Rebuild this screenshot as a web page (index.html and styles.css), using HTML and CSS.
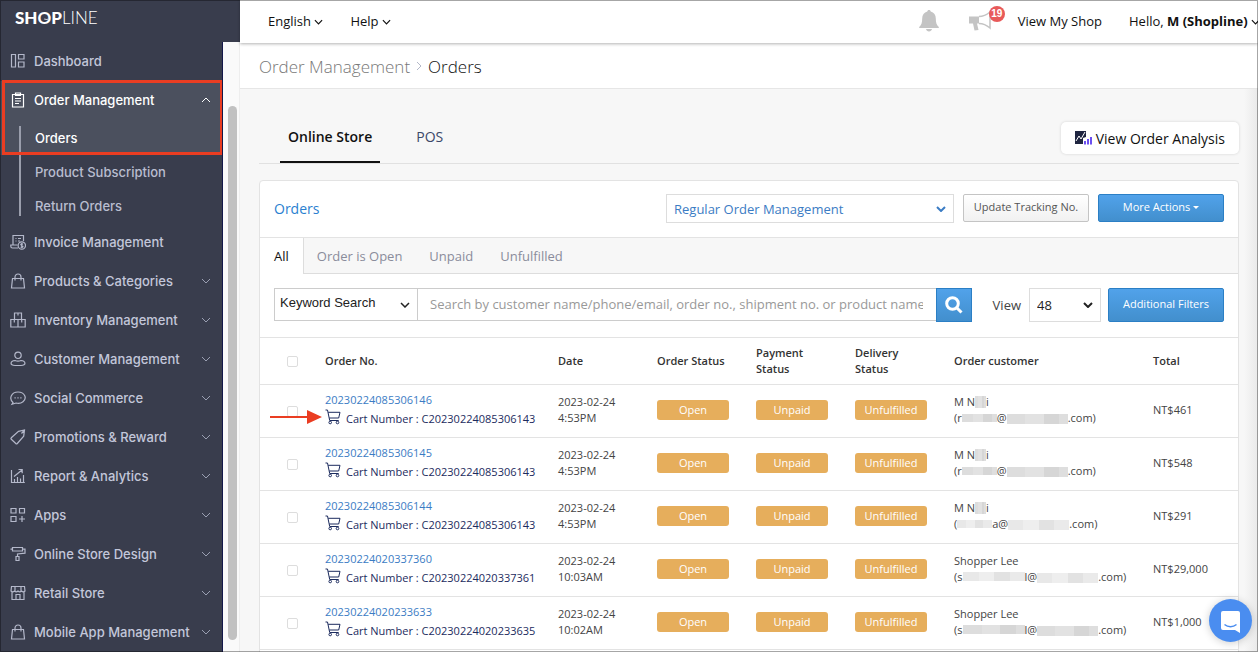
FILE: index.html
```html
<!DOCTYPE html>
<html lang="en">
<head>
  <meta charset="UTF-8">
  <title>Orders - SHOPLINE</title>
  <link rel="stylesheet" href="styles.css">
</head>
<body>
  <!-- shared icons -->
  <svg class="sprite" width="0" height="0">
    <symbol id="down" viewBox="0 0 10 6"><path d="M1 1l4 4 4-4"/></symbol>
    <symbol id="cart" viewBox="0 0 16 16">
      <path d="M.5 1h2l2.200 10.500h9M3.200 3.300h11.800l-1.300 5.700H4.300"/>
      <circle cx="5.200" cy="13.500" r="1.300"/><circle cx="12.500" cy="13.500" r="1.300"/>
    </symbol>
    <symbol id="bag" viewBox="0 0 16 16"><path d="M2.500 5.500h11l1 9.500h-13zM5 7.500V4a3 3 0 0 1 6 0v3.500"/></symbol>
  </svg>

  <aside class="sidebar">
    <a class="brand" href="#"><b>SH<span class="brand-o">O</span>P</b>LINE</a>
    <div class="sidebar-body">
      <nav class="nav">
        <a class="nav-item" href="#">
          <svg class="icon" viewBox="0 0 16 16"><path d="M1.500 1.500h4v12.500h-4zM8.500 1.500h5.500v4.500H8.500zM8.500 9h5.500v5H8.500z"/></svg>
          <span>Dashboard</span>
        </a>
        <div class="nav-group">
          <a class="nav-item active" href="#">
            <svg class="icon" viewBox="0 0 16 16"><path d="M2.500 2.500h11V15h-11zM5.500 1h5v2.500h-5zM5 6.500h6M5 9h6M5 11.500h4"/></svg>
            <span>Order Management</span>
            <svg class="chevron up" viewBox="0 0 10 6"><use href="#down"/></svg>
          </a>
          <div class="submenu">
            <a class="current" href="#">Orders</a>
            <a href="#">Product Subscription</a>
            <a href="#">Return Orders</a>
          </div>
          <div class="highlight"></div>
        </div>
        <a class="nav-item" href="#">
          <svg class="icon" viewBox="0 0 16 16"><path d="M3 11V1.500h10.500V7M3 11H.8v1.200c0 1 .7 1.800 1.700 1.800H8M3 11h4.500M5.500 4.500h1M8 4.500h3M5.500 7h1M8 7h2"/><circle cx="11.800" cy="11.500" r="3.700"/><path d="M13 10.200c-.8-.7-2.300-.5-2.300.4 0 1.100 2.300.7 2.300 1.900 0 .9-1.600 1.100-2.400.3M11.800 9v5"/></svg>
          <span>Invoice Management</span>
        </a>
        <a class="nav-item" href="#">
          <svg class="icon"><use href="#bag"/></svg>
          <span>Products &amp; Categories</span>
          <svg class="chevron"><use href="#down"/></svg>
        </a>
        <a class="nav-item" href="#">
          <svg class="icon" viewBox="0 0 16 16"><path d="M4.500 1h7v6.500h-7zM.8 7.500H8V15H.8zM8 7.500h7.200V15H8zM8 1v2.500M4.300 7.500v3M11.700 7.500v3"/></svg>
          <span>Inventory Management</span>
          <svg class="chevron"><use href="#down"/></svg>
        </a>
        <a class="nav-item" href="#">
          <svg class="icon" viewBox="0 0 16 16"><circle cx="8" cy="4.300" r="3.200"/><path d="M5 9.500c-5 .5-5.500 5 0 5h6c5.500 0 5-4.500 0-5-2 .8-4 .8-6 0z"/></svg>
          <span>Customer Management</span>
          <svg class="chevron"><use href="#down"/></svg>
        </a>
        <a class="nav-item" href="#">
          <svg class="icon" viewBox="0 0 16 16"><path d="M3 12.500C-1.500 8.500 1.500 2 8 2s9.500 6 5 9.700c-2 1.600-4.500 2-7 1.300L2 14.200zM4.500 7.800h1.200M7.400 7.800h1.200M10.300 7.800h1.200"/></svg>
          <span>Social Commerce</span>
          <svg class="chevron"><use href="#down"/></svg>
        </a>
        <a class="nav-item" href="#">
          <svg class="icon" viewBox="0 0 16 16"><path d="M8.500 2.300L14.500 1l-.8 6.200-6.400 7.300c-.5.500-1 .5-1.500 0L1.300 10.300c-.5-.5-.5-1 0-1.500zM14.500 1l-3 3.500"/></svg>
          <span>Promotions &amp; Reward</span>
          <svg class="chevron"><use href="#down"/></svg>
        </a>
        <a class="nav-item" href="#">
          <svg class="icon" viewBox="0 0 16 16"><path d="M1.500 2v12.500h13.300M4.500 14.500V11M7.500 14.500V9M10.500 14.500v-4M13.500 14.500V7M4 8.500L12 2M8.500 1.500h3.700v3.700"/></svg>
          <span>Report &amp; Analytics</span>
          <svg class="chevron"><use href="#down"/></svg>
        </a>
        <a class="nav-item" href="#">
          <svg class="icon" viewBox="0 0 16 16"><path d="M1 1.500h5V6H1zM9.500 1.500h5V6h-5zM1 9.500h5v5H1zM12 9v6M9 12h6"/></svg>
          <span>Apps</span>
          <svg class="chevron"><use href="#down"/></svg>
        </a>
        <a class="nav-item" href="#">
          <svg class="icon" viewBox="0 0 16 16"><path d="M2.500 1.500h10V5h-10zM2.500 3.200H.5M12.500 3.200H15v4L7.500 8v2.500M6 10.500h3v4H6z"/></svg>
          <span>Online Store Design</span>
          <svg class="chevron"><use href="#down"/></svg>
        </a>
        <a class="nav-item" href="#">
          <svg class="icon" viewBox="0 0 16 16"><path d="M1.500 1.500h13L15 6c-1 1-2.500 1-3.500 0-1 1-2.500 1-3.500 0-1 1-2.500 1-3.500 0C3.500 7 2 7 1 6zM2 7v7.500h12V7M6 14.500V9.500h4v5M5 1.500V6M11 1.500V6"/></svg>
          <span>Retail Store</span>
          <svg class="chevron"><use href="#down"/></svg>
        </a>
        <a class="nav-item" href="#">
          <svg class="icon"><use href="#bag"/></svg>
          <span>Mobile App Management</span>
          <svg class="chevron"><use href="#down"/></svg>
        </a>
      </nav>
      <div class="scroll-track"><div class="scroll-thumb"></div></div>
    </div>
  </aside>

  <main class="main">
    <header class="topbar">
      <a href="#">English <svg class="caret"><use href="#down"/></svg></a>
      <a href="#">Help <svg class="caret"><use href="#down"/></svg></a>
      <button class="icon-btn bell" aria-label="Notifications">
        <svg width="20" height="22" viewBox="0 0 20 22"><path d="M10 0c1 0 1.700.7 1.700 1.600C15 2.400 16.800 5 16.800 8.500c0 4.500.9 6.700 3 8.500v1H.2v-1c2.100-1.800 3-4 3-8.500 0-3.500 1.800-6.100 5.100-6.900C8.300.7 9 0 10 0zM7 19h6c-.3 1.500-1.500 2.500-3 2.500S7.300 20.500 7 19z"/></svg>
      </button>
      <button class="icon-btn news" aria-label="News">
        <svg width="22" height="20" viewBox="0 0 22 20"><path d="M0 5.500h10v7H8l1.500 6.500-4 .5L4 12.500H0z"/><path class="horn" d="M10 5.500c4 0 7.500-1.600 11-4.500v16c-3.500-3-7-4.500-11-4.500"/></svg>
        <span class="count">19</span>
      </button>
      <a class="shop-link" href="#">View My Shop</a>
      <a class="user" href="#">Hello, <b>M (Shopline)</b> <svg class="caret"><use href="#down"/></svg></a>
    </header>

    <div class="breadcrumb">
      <a href="#">Order Management</a>
      <svg width="6" height="10" viewBox="0 0 6 10"><path d="M1 1l4 4-4 4"/></svg>
      <span>Orders</span>
    </div>

    <div class="content">
      <div class="channels">
        <a class="selected" href="#">Online Store</a>
        <a href="#">POS</a>
        <button class="analysis">
          <svg width="17" height="14" viewBox="0 0 17 14"><path fill="#1f2540" d="M0 0h11v6L8 7v6H0z"/><path fill="none" stroke="#fff" d="M1 10l3-5 2 3 4-7"/><path fill="#6c50f0" d="M9 10h2v3.500H9zM12 8h2v5.500h-2zM15 6h2v7.500h-2z"/></svg>
          View Order Analysis
        </button>
      </div>

      <section class="panel">
        <div class="panel-head">
          <h1>Orders</h1>
          <div class="select mode">
            <select aria-label="Order type"><option>Regular Order Management</option></select>
            <svg class="arrow"><use href="#down"/></svg>
          </div>
          <button class="btn">Update Tracking No.</button>
          <button class="btn primary">More Actions <span class="tri"></span></button>
        </div>

        <div class="tabs">
          <a class="selected" href="#">All</a>
          <a href="#">Order is Open</a>
          <a href="#">Unpaid</a>
          <a href="#">Unfulfilled</a>
        </div>

        <div class="search">
          <div class="select keyword">
            <select aria-label="Search type"><option>Keyword Search</option></select>
            <svg class="arrow"><use href="#down"/></svg>
          </div>
          <input type="text" aria-label="Search orders" placeholder="Search by customer name/phone/email, order no., shipment no. or product name">
          <button class="go" aria-label="Search">
            <svg width="18" height="18" viewBox="0 0 18 18"><circle cx="7.500" cy="7.500" r="5.800"/><path d="M12 12l4.500 4.500"/></svg>
          </button>
          <label for="page-size">View</label>
          <div class="select size">
            <select id="page-size"><option>48</option></select>
            <svg class="arrow"><use href="#down"/></svg>
          </div>
          <button class="btn primary filters">Additional Filters</button>
        </div>

        <table class="orders">
          <colgroup>
            <col class="c-check"><col><col class="c-mid"><col class="c-mid"><col class="c-mid"><col class="c-mid"><col class="c-customer"><col class="c-total">
          </colgroup>
          <thead>
            <tr>
              <th><input type="checkbox" aria-label="Select all"></th>
              <th>Order No.</th>
              <th>Date</th>
              <th>Order Status</th>
              <th>Payment Status</th>
              <th>Delivery Status</th>
              <th>Order customer</th>
              <th>Total</th>
            </tr>
          </thead>
          <tbody>
            <tr>
              <td class="pointed">
                <input type="checkbox" aria-label="Select order">
                <svg class="pointer" width="52" height="14" viewBox="0 0 52 14"><path d="M0 6h37V0l15 7-15 7V8H0z"/></svg>
              </td>
              <td><a href="#">20230224085306146</a><div class="cart"><svg><use href="#cart"/></svg>Cart Number : C20230224085306143</div></td>
              <td>2023-02-24<br>4:53PM</td>
              <td><span class="badge">Open</span></td>
              <td><span class="badge">Unpaid</span></td>
              <td><span class="badge">Unfulfilled</span></td>
              <td>M N<i class="mask name"></i>i<br>(r<i class="mask user-part"></i>@<i class="mask host"></i>.com)</td>
              <td>NT$461</td>
            </tr>
            <tr>
              <td><input type="checkbox" aria-label="Select order"></td>
              <td><a href="#">20230224085306145</a><div class="cart"><svg><use href="#cart"/></svg>Cart Number : C20230224085306143</div></td>
              <td>2023-02-24<br>4:53PM</td>
              <td><span class="badge">Open</span></td>
              <td><span class="badge">Unpaid</span></td>
              <td><span class="badge">Unfulfilled</span></td>
              <td>M N<i class="mask name"></i>i<br>(r<i class="mask user-part"></i>@<i class="mask host"></i>.com)</td>
              <td>NT$548</td>
            </tr>
            <tr>
              <td><input type="checkbox" aria-label="Select order"></td>
              <td><a href="#">20230224085306144</a><div class="cart"><svg><use href="#cart"/></svg>Cart Number : C20230224085306143</div></td>
              <td>2023-02-24<br>4:53PM</td>
              <td><span class="badge">Open</span></td>
              <td><span class="badge">Unpaid</span></td>
              <td><span class="badge">Unfulfilled</span></td>
              <td>M N<i class="mask name"></i>i<br>(<i class="mask user-part light"></i>a@<i class="mask host light"></i>.com)</td>
              <td>NT$291</td>
            </tr>
            <tr>
              <td><input type="checkbox" aria-label="Select order"></td>
              <td><a href="#">20230224020337360</a><div class="cart"><svg><use href="#cart"/></svg>Cart Number : C20230224020337361</div></td>
              <td>2023-02-24<br>10:03AM</td>
              <td><span class="badge">Open</span></td>
              <td><span class="badge">Unpaid</span></td>
              <td><span class="badge">Unfulfilled</span></td>
              <td>Shopper Lee<br>(s<i class="mask long light"></i>l@<i class="mask host light"></i>.com)</td>
              <td>NT$29,000</td>
            </tr>
            <tr>
              <td><input type="checkbox" aria-label="Select order"></td>
              <td><a href="#">20230224020233633</a><div class="cart"><svg><use href="#cart"/></svg>Cart Number : C20230224020233635</div></td>
              <td>2023-02-24<br>10:02AM</td>
              <td><span class="badge">Open</span></td>
              <td><span class="badge">Unpaid</span></td>
              <td><span class="badge">Unfulfilled</span></td>
              <td>Shopper Lee<br>(s<i class="mask long"></i>l@<i class="mask host"></i>.com)</td>
              <td>NT$1,000</td>
            </tr>
          </tbody>
        </table>
      </section>
    </div>
  </main>

  <button class="chat" aria-label="Chat">
    <svg width="22" height="24" viewBox="0 0 22 24"><path class="bubble" d="M3 1h15a2 2 0 0 1 2 2v20l-5-3H3a2 2 0 0 1-2-2V3a2 2 0 0 1 2-2z"/><path class="smile" d="M4.500 14.500c3.500 3 8.500 3 12 0"/></svg>
  </button>
</body>
</html>
```
FILE: styles.css
```css
* {
  box-sizing: border-box;
}
body {
  margin: 0;
  height: 100vh;
  display: flex;
  overflow: hidden;
  font-family: "Open Sans", sans-serif;
  font-size: 13px;
  color: #111;
  background: #f7f7f7;
}
/* window frame */
body::after {
  content: "";
  position: fixed;
  inset: 0;
  border: 1px solid rgba(0,0,0,0.35);
  pointer-events: none;
  z-index: 10;
}
a {
  color: inherit;
  text-decoration: none;
}
button, input, select {
  font-family: inherit;
  margin: 0;
}
svg {
  flex: none;
  fill: none;
}
.sprite {
  position: absolute;
}

/* sidebar */
.sidebar {
  width: 240px;
  flex: none;
  display: flex;
  flex-direction: column;
  background: #fafafa;
  font-family: Inter, sans-serif;
}
.brand {
  flex: none;
  height: 42px;
  padding: 8px 15px;
  background: #393d4d;
  color: #fff;
  font-family: Lato, sans-serif;
  font-weight: 300;
  font-size: 17px;
  line-height: 20px;
}
.brand b {
  font-weight: 900;
}
.brand-o {
  position: relative;
  font-weight: 700;
}
.brand-o::after {
  content: "";
  position: absolute;
  left: 5px;
  top: 6px;
  width: 5px;
  height: 5px;
  border: 1px solid transparent;
  border-bottom-color: #c9ccd6;
  border-radius: 50%;
}
.sidebar-body {
  flex: 1;
  min-height: 0;
  display: flex;
}
.nav {
  flex: 1;
  background: #393d4d;
  border-right: 1px solid #14184a;
  overflow: hidden;
}
.nav-item {
  display: flex;
  align-items: center;
  gap: 8px;
  height: 39px;
  padding: 0 11px 1px 10px;
  color: #c3c7da;
  font-size: 13px;
  font-weight: 500;
}
.nav-item span {
  flex: 1;
}
.icon {
  width: 16px;
  height: 16px;
  stroke: #b4b8ca;
  stroke-width: 1.200;
}
.chevron {
  width: 10px;
  height: 6px;
  stroke: #9a9fb2;
}
.nav-group {
  position: relative;
}
.nav-item.active {
  color: #fff;
  background: #4b505e;
}
.active .icon, .active .chevron {
  stroke: #fff;
}
.up {
  transform: rotate(180deg);
}
.submenu {
  padding-top: 1px;
  background: linear-gradient(#4b505e 35px, #393d4d 35px);
  position: relative;
}
.submenu::before {
  content: "";
  position: absolute;
  left: 19px;
  top: 6px;
  bottom: 7px;
  width: 2px;
  background: #9a9eac;
}
.submenu a {
  display: block;
  padding-left: 35px;
  line-height: 34px;
  color: #b9bdd0;
  font-weight: 500;
}
.submenu .current {
  color: #fff;
}
.highlight {
  position: absolute;
  left: 2px;
  right: -1px;
  top: -1px;
  height: 75px;
  border: 3px solid #ea3d22;
}
.scroll-track {
  width: 17px;
  padding: 64px 2px 12px 5px;
  border-right: 1px solid #eee;
}
.scroll-thumb {
  height: 100%;
  border-radius: 5px;
  background: #c1c1c1;
}

/* top bar */
.main {
  flex: 1;
  min-width: 0;
  display: flex;
  flex-direction: column;
  position: relative;
}
.topbar {
  flex: none;
  height: 43px;
  display: flex;
  align-items: center;
  padding: 0 0 2px 28px;
  background: #fff;
  box-shadow: 0 1px 3px rgba(0,0,0,0.3);
  z-index: 1;
  white-space: nowrap;
}
.topbar > a {
  margin-right: 27px;
}
.caret {
  width: 9px;
  height: 6px;
  stroke: #111;
  stroke-width: 1.300;
  vertical-align: 1px;
}
.icon-btn {
  border: none;
  background: none;
  padding: 0;
  display: flex;
  position: relative;
}
.icon-btn svg {
  fill: #c4c4c4;
}
.icon-btn .horn {
  fill: #fff;
  stroke: #c4c4c4;
  stroke-width: 1.500;
}
.bell {
  margin-left: auto;
}
.news {
  margin: 1px 27px 0 30px;
}
.count {
  position: absolute;
  left: 20px;
  top: -5px;
  width: 16px;
  height: 16px;
  border-radius: 50%;
  background: #e85a5a;
  color: #fff;
  font: bold 10px/16px "Liberation Sans", sans-serif;
  text-align: center;
}
.topbar .user {
  margin-right: -2px;
}

.breadcrumb {
  flex: none;
  height: 46px;
  display: flex;
  align-items: center;
  gap: 6px;
  padding: 1px 19px 0;
  background: #fff;
  border-bottom: 1px solid #e6e6e6;
  font-size: 17px;
  font-weight: 300;
}
.breadcrumb a {
  color: #777;
}
.breadcrumb svg {
  stroke: #b3b8c8;
}

/* content */
.content {
  flex: 1;
  min-height: 0;
  padding: 0 19px;
  background: linear-gradient(to left, #e9e9e9, #f7f7f7 14px);
}
.channels {
  display: flex;
  align-items: flex-end;
  height: 75px;
  padding-left: 21px;
  border-bottom: 1px solid #e1e1e1;
  font-size: 14px;
  color: #3b4868;
}
.channels a {
  height: 36px;
  padding: 0 8px;
  margin-right: 28px;
}
.channels .selected {
  border-bottom: 2px solid #111;
  color: #111;
  font-weight: 600;
}
.analysis {
  display: flex;
  align-items: center;
  gap: 4px;
  height: 32px;
  margin: 0 0 9px auto;
  padding: 0 14px;
  border: none;
  border-radius: 5px;
  background: #fff;
  box-shadow: 0 0 3px rgba(0,0,0,0.15);
  color: #111;
  font-size: 14px;
  font-weight: 500;
}
.panel {
  margin-top: 16px;
  padding-bottom: 20px;
  border: 1px solid #e3e3e3;
  border-radius: 4px;
  background: #fff;
}
.panel-head {
  display: flex;
  gap: 9px;
  height: 57px;
  padding: 13px 14px;
  border-bottom: 1px solid #e3e3e3;
}
h1 {
  flex: 1;
  margin: 0;
  color: #2a80d0;
  font-size: 14px;
  font-weight: 400;
  line-height: 30px;
}
.select {
  display: grid;
  align-items: center;
}
.select select, .select .arrow {
  grid-area: 1 / 1;
}
.select select {
  appearance: none;
  height: 100%;
  width: 100%;
  border: 1px solid #ddd;
  background: #fff;
  color: #222;
  font-size: 13px;
  padding: 0 7px;
}
.arrow {
  width: 10px;
  height: 6px;
  justify-self: end;
  margin-right: 8px;
  stroke: #222;
  stroke-width: 1.500;
  pointer-events: none;
}
.mode {
  width: 288px;
  height: 29px;
}
.mode select {
  color: #3b7cc4;
}
.mode .arrow {
  stroke: #3b7cc4;
  stroke-width: 2;
}
.btn {
  width: 126px;
  height: 28px;
  padding: 0 0 3px;
  border: 1px solid #c4c4c4;
  border-radius: 2px;
  background: linear-gradient(#fff, #f1f1f1);
  color: #555;
  font-size: 11px;
}
.primary {
  border-color: #2b7fc5;
  background: linear-gradient(#51a2ea, #428fcd);
  color: #fff;
  font-weight: 500;
}
.tri {
  display: inline-block;
  border: 3px solid transparent;
  border-top-color: #fff;
  border-bottom: none;
  vertical-align: 2px;
}
.tabs {
  display: flex;
  height: 36px;
  line-height: 37px;
  background: #f7f7f7;
  color: #8a8c9b;
}
.tabs a {
  padding: 0 14px 0 13px;
  border-bottom: 1px solid #ddd;
}
.tabs .selected {
  padding-left: 14px;
  background: #fff;
  color: #111;
  border-right: 1px solid #ddd;
  border-bottom: none;
}
.tabs::after {
  content: "";
  flex: 1;
  border-bottom: 1px solid #ddd;
}
.search {
  display: flex;
  height: 64px;
  padding: 14px 14px 15px;
  border-bottom: 1px solid #e3e3e3;
}
.keyword {
  width: 144px;
  height: 33px;
}
.keyword select {
  border-color: #ccc;
  padding: 0 6px 4px 5px;
  font-family: "Liberation Sans", sans-serif;
}
.search input {
  flex: 1;
  min-width: 0;
  height: 33px;
  padding: 0 13px 2px 12px;
  border: 1px solid #ccc;
  border-width: 1px 0;
  background: #fff;
  font-size: 13px;
}
.search input::placeholder {
  color: #999;
}
.go {
  width: 36px;
  height: 34px;
  padding: 0;
  border: 1px solid #2b7fc5;
  background: linear-gradient(#51a2ea, #428fcd);
}
.go svg {
  display: block;
  margin: auto;
  stroke: #fff;
  stroke-width: 3;
}
.search label {
  padding: 0 8px 0 21px;
  line-height: 34px;
  color: #444;
}
.size {
  width: 72px;
  height: 34px;
  margin-right: 7px;
}
.size .arrow {
  stroke-width: 2;
}
.filters {
  width: 116px;
  height: 34px;
}

/* orders table */
.orders {
  width: 100%;
  table-layout: fixed;
  border-collapse: collapse;
  font-size: 11px;
  line-height: 16px;
  color: #444;
}
.c-check {
  width: 55px;
}
.c-mid {
  width: 99px;
}
.c-customer {
  width: 199px;
}
.c-total {
  width: 95px;
}
th, td {
  height: 53px;
  padding: 0 10px 1px;
  border-bottom: 1px solid #e3e3e3;
  text-align: left;
}
th {
  height: 46px;
  padding-bottom: 0;
  color: #333;
  font-weight: 600;
}
td a {
  display: block;
  color: #3b7cc4;
}
th:first-child, td:first-child {
  padding: 2px 0 0 27px;
}
.orders input {
  appearance: none;
  display: block;
  width: 11px;
  height: 11px;
  border: 1px solid #ddd;
  border-radius: 2px;
  background: #fff;
}
.cart {
  display: flex;
  gap: 5px;
  margin-top: 1px;
  line-height: 20px;
  color: #1c2b5e;
  white-space: nowrap;
}
.cart svg {
  width: 16px;
  height: 16px;
  stroke: #1c2b5e;
}
.pointed {
  position: relative;
}
.pointer {
  position: absolute;
  left: 10px;
  top: 25px;
  fill: #ea3d22;
}
.badge {
  display: block;
  width: 72px;
  border-radius: 3px;
  background: #e6ae5c;
  color: #fff;
  line-height: 20px;
  text-align: center;
}
/* redacted customer details */
.mask {
  display: inline-block;
  height: 8px;
  background: linear-gradient(to right, #ddd 30%, #e2e2e2 30% 60%, #d6d6d6 60% 85%, #dedede 85%);
}
.name {
  width: 11px;
  height: 12px;
  vertical-align: -2px;
}
.user-part {
  width: 35px;
}
.host {
  width: 61px;
  height: 10px;
  vertical-align: -2px;
}
.long {
  width: 62px;
  height: 9px;
}
.light {
  background: linear-gradient(to right, #e8e8e8 25%, #eee 25% 50%, #e2e2e2 50% 75%, #eaeaea 75%);
}
.chat {
  position: fixed;
  right: 6px;
  bottom: 10px;
  width: 43px;
  height: 43px;
  padding: 0;
  border: none;
  border-radius: 50%;
  background: #4a8df0;
  box-shadow: 0 1px 8px rgba(0,0,0,0.2);
}
.chat svg {
  display: block;
  margin: 2px auto 0;
}
.bubble {
  fill: #fff;
}
.smile {
  stroke: #4a8df0;
  stroke-width: 1.500;
}
```
